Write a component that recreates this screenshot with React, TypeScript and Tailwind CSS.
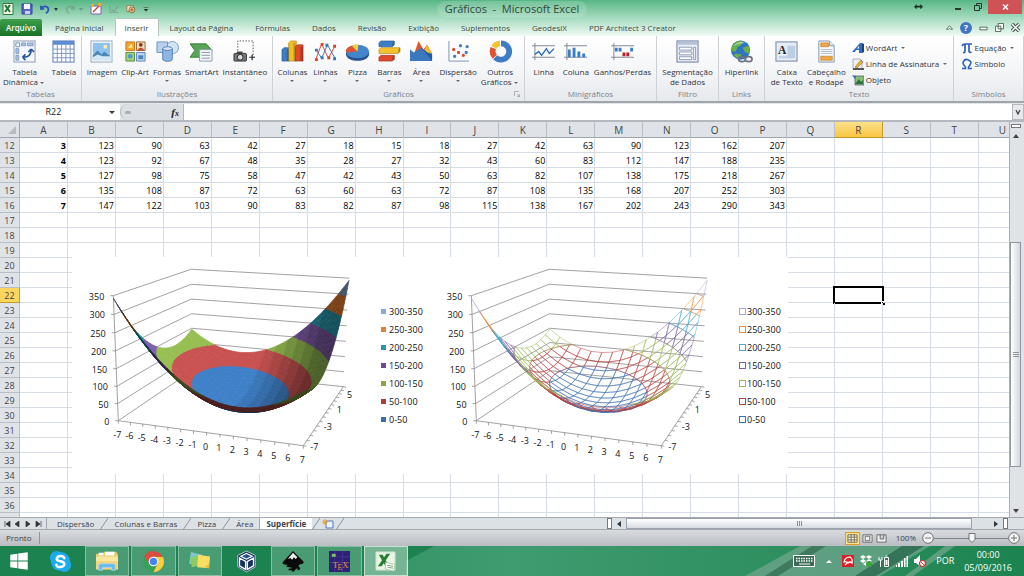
import React from 'react';
import { FaWindows } from 'react-icons/fa';

const TABS = ['Página Inicial', 'Inserir', 'Layout da Página', 'Fórmulas', 'Dados', 'Revisão', 'Exibição', 'Suplementos', 'GeodesiX', 'PDF Architect 3 Creator'];
const COLUMNS = 'ABCDEFGHIJKLMNOPQRSTU'.split('');
const ROWS = Array.from({ length: 26 }, (_, i) => i + 12);
const SHEETS = ['Dispersão', 'Colunas e Barras', 'Pizza', 'Área'];

const BANDS = [
  { label: '0-50', fill: [62, 128, 200], line: '#3a6fb0' },
  { label: '50-100', fill: [200, 82, 80], line: '#b8403c' },
  { label: '100-150', fill: [150, 190, 80], line: '#98b954' },
  { label: '150-200', fill: [128, 92, 172], line: '#7d60a0' },
  { label: '200-250', fill: [40, 160, 182], line: '#46aac5' },
  { label: '250-300', fill: [240, 130, 50], line: '#f08c38' },
  { label: '300-350', fill: [142, 170, 214], line: '#a6a6dc' },
];
const SWATCHES = ['#3f6fa8', '#b03c3a', '#87a54a', '#6b4c94', '#2f93a8', '#dc8138', '#8ea9d0'];

const height = (x: number, y: number) => 3 * x * x + 2 * x * y + 2 * y * y;

/* ---------- surface charts ---------- */

type Point = [number, number, number];

const ORIGIN = [46.3, 163.7];
const EDGES = [
  { at: [231.3, 188.7], k: -0.086 },
  { at: [120, 113.7], k: 0.2455 },
  { at: [41.3, 38.7], k: -0.05 },
];

const depth = ([x, y, z]: Point) =>
  1 + (EDGES[0].k * (x + 7)) / 14 + (EDGES[1].k * (y + 7)) / 14 + (EDGES[2].k * z) / 350;

function project(p: Point): [number, number] {
  const t = [(p[0] + 7) / 14, (p[1] + 7) / 14, p[2] / 350];
  const w = depth(p);
  return [0, 1].map((a) => {
    const sum = EDGES.reduce((n, e, i) => n + t[i] * (e.at[a] * (1 + e.k) - ORIGIN[a]), ORIGIN[a]);
    return sum / w;
  }) as [number, number];
}

const toPoints = (pts: Point[]) => pts.map((p) => project(p).map((n) => n.toFixed(2)).join(',')).join(' ');

// keeps the part of a polygon where sign * (z - level) >= 0
function clip(pts: Point[], level: number, sign: number): Point[] {
  const out: Point[] = [];
  pts.forEach((a, i) => {
    const b = pts[(i + 1) % pts.length];
    const da = sign * (a[2] - level);
    const db = sign * (b[2] - level);
    if (da >= 0) out.push(a);
    if (da * db < 0) {
      const t = da / (da - db);
      out.push([a[0] + t * (b[0] - a[0]), a[1] + t * (b[1] - a[1]), level]);
    }
  });
  return out;
}

function facets(step: number) {
  const list: { band: number; pts: Point[]; far: number; x: number }[] = [];
  for (let x = -7; x < 7; x += step) {
    for (let y = -7; y < 7; y += step) {
      const corner = (cx: number, cy: number): Point => [cx, cy, height(cx, cy)];
      const quad = [corner(x, y), corner(x + step, y), corner(x + step, y + step), corner(x, y + step)];
      const far = quad.reduce((n, p) => n + depth(p), 0);
      BANDS.forEach((_, band) => {
        const pts = clip(clip(quad, band * 50, 1), band * 50 + 50, -1);
        if (pts.length > 2) list.push({ band, pts, far, x });
      });
    }
  }
  return list.sort((a, b) => b.far - a.far);
}

function shade(facet: { band: number; pts: Point[]; x: number }) {
  const s = facet.pts.map(project);
  const area = s.reduce((n, p, i) => {
    const q = s[(i + 1) % s.length];
    return n + p[0] * q[1] - q[0] * p[1];
  }, 0);
  const column = Math.floor(facet.x);
  const light = area > 0 ? 0.38 : Math.max(0.5, Math.min(1, 0.92 - column * 0.08));
  return `rgb(${BANDS[facet.band].fill.map((c) => Math.round(c * light)).join(',')})`;
}

const LEVELS = [0, 50, 100, 150, 200, 250, 300, 350];
const TICKS = Array.from({ length: 15 }, (_, i) => i - 7);

function SurfaceChart({ wire = false, title }: { wire?: boolean; title: string }) {
  return (
    <svg viewBox="0 0 358 217" className="block w-[358px] bg-white font-['Open_Sans',sans-serif] text-[9px]" role="img" aria-label={title}>
      <g fill="none" stroke="#8a8a8a" strokeWidth="0.8">
        {LEVELS.map((z) => {
          const [x, y] = project([-7, -7, z]);
          return (
            <g key={z}>
              <polyline points={toPoints([[-7, -7, z], [-7, 7, z], [7, 7, z]])} />
              <path d={`M${x - 3} ${y}h3`} />
            </g>
          );
        })}
        <polyline points={toPoints([[-7, -7, 350], [-7, -7, 0], [7, -7, 0], [7, 7, 0]])} />
        {TICKS.map((t) => {
          const [x, y] = project([t, -7, 0]);
          const [dx, dy] = project([7, t, 0]);
          return <path key={t} d={`M${x} ${y}v3M${dx} ${dy}l3 .5`} />;
        })}
      </g>
      {facets(wire ? 1 : 0.5).map((f, i) => {
        const color = wire ? BANDS[f.band].line : shade(f);
        return <polygon key={i} points={toPoints(f.pts)} fill={wire ? 'none' : color} stroke={color} strokeWidth={wire ? 0.5 : 0.7} strokeLinejoin="round" />;
      })}
      <g fill="#111">
        {LEVELS.map((z) => {
          const [x, y] = project([-7, -7, z]);
          return <text key={z} x={x - 9} y={y + 4} textAnchor="end">{z}</text>;
        })}
        {TICKS.map((t) => {
          const [x, y] = project([t, -7, 0]);
          return <text key={t} x={x - 1} y={y + 17} textAnchor="middle">{t}</text>;
        })}
        {[-7, -3, 1, 5].map((t) => {
          const [x, y] = project([7, t, 0]);
          return <text key={t} x={x + 11} y={y + 4} textAnchor="middle">{t}</text>;
        })}
        {BANDS.map((b, i) => (
          <g key={b.label}>
            <rect x={wire ? 309.5 : 309} y={(wire ? 159.5 : 160) - 18 * i} width={wire ? 6 : 5} height={wire ? 6 : 5} fill={wire ? '#fff' : SWATCHES[i]} stroke={wire ? b.line : 'none'} />
            <text x="317" y={166 - 18 * i}>{b.label}</text>
          </g>
        ))}
      </g>
    </svg>
  );
}

/* ---------- ribbon icons ---------- */

const ICONS: Record<string, React.ReactNode> = {
  pivot: (
    <>
      <rect x="1" y="1" width="22" height="22" fill="#f4f7fb" stroke="#8a9bb5" />
      <path d="M3 3h4v4H3z" fill="#fff" stroke="#6f8fc0" />
      <path d="M9 3h4v3H9zM15 3h6v3h-6zM3 9h3v5H3zM3 16h3v5H3z" fill="#a9c3e6" stroke="#6f8fc0" strokeWidth=".8" />
      <path d="M11 18c5 0 8-3 8-8M19 9.500l-3 3M19 9.500l3 3M10 18l3-3M10 18l3 3" fill="none" stroke="#24549e" strokeWidth="1.700" />
    </>
  ),
  table: (
    <>
      <rect x="1" y="1" width="22" height="22" fill="#fff" stroke="#5878ad" />
      <path d="M1 1h22v4H1z" fill="#5d8bd2" />
      <path d="M1 9.500h22M1 14h22M1 18.500h22M5.500 5v18M10 5v18M14.500 5v18M19 5v18" stroke="#7e97bd" />
    </>
  ),
  image: (
    <>
      <rect x="1" y="1" width="22" height="22" fill="#f5f8fb" stroke="#99a9bb" />
      <path d="M3 3h18v18H3z" fill="#8fc3ee" />
      <circle cx="16" cy="7" r="2" fill="#fdf0a8" />
      <path d="M3 16l5-5 4 4 3-3 6 5v3H3z" fill="#4a87b8" />
      <path d="M3 18l5-3 5 2h8v4H3z" fill="#d2e8f6" />
    </>
  ),
  clipart: (
    <>
      <path d="M2 2h9v9H2z" fill="#f3a431" stroke="#c97a18" />
      <path d="M13 2h9v9h-9z" fill="#f2ddbb" stroke="#94663b" />
      <path d="M2 13h9v9H2z" fill="#a7d275" stroke="#5a8c43" />
      <path d="M13 13h9v9h-9z" fill="#b9d5f2" stroke="#5f87b8" />
      <path d="M4 8l4-4 1 4z" fill="#fff3a0" />
      <circle cx="17.500" cy="5" r="2" fill="#7c3b1f" />
      <path d="M14 11c1-4 6-4 7 0z" fill="#c34c2b" />
      <circle cx="6.500" cy="17" r="2.500" fill="#4b9bd0" />
      <path d="M15 20v-4h5v4z" fill="#4b82c4" />
    </>
  ),
  shapes: (
    <>
      <circle cx="17" cy="8" r="6.500" fill="#d2e3f4" stroke="#7d9dc4" />
      <path d="M1 2h11v11H1z" fill="#b8d1ec" stroke="#6e92be" />
      <path d="M7 9v11c0 3 10 3 10 0V9z" fill="#8db6e3" stroke="#567fb2" />
      <ellipse cx="12" cy="9" rx="5" ry="2" fill="#d5e6f7" stroke="#567fb2" />
    </>
  ),
  smartart: (
    <>
      <path d="M0 4h17l6 7-6 7H0l5-7z" fill="#58a557" stroke="#39813d" />
      <path d="M10 10h13v12H10z" fill="#f4f7fa" stroke="#8d9bb0" />
      <path d="M12 13h9M12 16h9M12 19h9" stroke="#8a98ac" />
    </>
  ),
  snapshot: (
    <>
      <path d="M5 11V1h16v15" fill="none" stroke="#555" strokeDasharray="1.500 1.500" />
      <rect x="1" y="14" width="13" height="8" rx="1" fill="#777" stroke="#333" />
      <path d="M4 12h6v2H4z" fill="#444" />
      <circle cx="7.500" cy="18" r="3" fill="#d7dde4" stroke="#222" />
      <path d="M17 18h6M20 15v6" stroke="#222" strokeWidth="1.200" />
    </>
  ),
  columns: (
    <>
      <path d="M1 10l2-2h6v14H1z" fill="#3e7cc6" stroke="#245690" strokeWidth=".6" />
      <path d="M8 3l2-2h6v21H8z" fill="#f0bf22" stroke="#a87e0c" strokeWidth=".6" />
      <path d="M15 7l2-2h6v17h-8z" fill="#e2492c" stroke="#9c2a16" strokeWidth=".6" />
      <path d="M6 10h2v12H6zM13 3h2v19h-2zM20 7h3v15h-3z" fill="#000" opacity=".2" />
    </>
  ),
  lines: (
    <>
      <path d="M2 20L8 4l7 15 7-13" fill="none" stroke="#d6452c" />
      <path d="M2 10l6 9 6-14 8 14" fill="none" stroke="#3976b9" />
      <path d="M1 19h3v3H1zM7 3h3v3H7zM14 17h3v3h-3zM20 5h3v3h-3z" fill="#d6452c" />
      <path d="M1 9h3v3H1zM7 17h3v3H7zM12 4h3v3h-3zM20 18h3v3h-3z" fill="#3976b9" />
    </>
  ),
  pie: (
    <>
      <path d="M0 12v3c1 9 23 9 24 0v-3z" fill="#24538e" />
      <ellipse cx="12" cy="12" rx="12" ry="7" fill="#4384cb" />
      <path d="M12 12L0 13v-1C0 9 2 7 6 6z" fill="#df5330" />
      <path d="M12 12L6 6q3-2 7-1z" fill="#f6cf38" />
    </>
  ),
  bars: (
    <>
      <path d="M1 3l2-2h14v4l-2 2H1z" fill="#3e7cc6" stroke="#245690" strokeWidth=".6" />
      <path d="M1 10l2-2h20v4l-2 2H1z" fill="#f3c22c" stroke="#a87e0c" strokeWidth=".6" />
      <path d="M1 18l2-2h14v4l-2 2H1z" fill="#e2492c" stroke="#9c2a16" strokeWidth=".6" />
      <path d="M15 3l2-2v4l-2 2zM21 10l2-2v4l-2 2zM15 18l2-2v4l-2 2z" fill="#000" opacity=".25" />
    </>
  ),
  area: (
    <>
      <path d="M3 18L9 1l5 9 4-5 5 9v7H3z" fill="#e2562e" />
      <path d="M18 5l5 9v6l-8-9z" fill="#f0bd2b" />
      <path d="M0 22V10l4 3 8-5 6 5 5 1v8z" fill="#3a78c0" />
      <path d="M12 8l6 5 5 2v7z" fill="#265a9b" />
    </>
  ),
  scatter: (
    <>
      <path d="M2 1v21h21" fill="none" stroke="#7e93b4" />
      <path d="M6 9h2v2H6zM11 12h2v2h-2zM16 15h2v2h-2z" fill="#d6452c" stroke="#d6452c" />
      <path d="M13 5h2v2h-2zM7 16h2v2H7zM20 6h2v2h-2zM19 12h2v2h-2z" fill="#3976b9" stroke="#3976b9" />
    </>
  ),
  donut: (
    <>
      <path d="M12.500 3.500a8.500 8.500 0 1 1-6 14.500" fill="none" stroke="#3e7cc6" strokeWidth="6" />
      <path d="M6 17.500a8.500 8.500 0 0 1-1.500-9" fill="none" stroke="#df5330" strokeWidth="6" />
      <path d="M5 7.500a8.500 8.500 0 0 1 6.500-4" fill="none" stroke="#f2c633" strokeWidth="6" />
    </>
  ),
  sparkline: (
    <>
      <path d="M0 6h24M0 18h24M3 3v18" stroke="#7d8794" />
      <path d="M3 15l4-3 3 4 5-7 3 5 5-5" fill="none" stroke="#2d6ab5" strokeWidth="1.400" />
    </>
  ),
  sparkcol: (
    <>
      <path d="M0 6h24M0 18h24M3 3v18" stroke="#7d8794" />
      <path d="M4 10h3v8H4zM9 8h3v10H9zM14 12h3v6h-3zM19 14h3v4h-3z" fill="#3e7cc6" />
    </>
  ),
  winloss: (
    <>
      <path d="M0 6h24M0 18h24M3 3v18" stroke="#7d8794" />
      <path d="M4 8h3v4H4zM8 8h3v4H8zM20 8h3v4h-3z" fill="#3e7cc6" />
      <path d="M12 13h3v4h-3zM16 13h3v4h-3z" fill="#b3202c" />
    </>
  ),
  slicer: (
    <>
      <rect x="1" y="1" width="22" height="22" fill="#eef2f8" stroke="#62769a" />
      <path d="M2 2h20v3H2z" fill="#b4c3db" />
      <path d="M3.500 7.500h13v3h-13zM3.500 12.500h13v3h-13zM3.500 17.500h13v3h-13zM18.500 7.500h2v13h-2z" fill="#fff" stroke="#7b8dae" strokeWidth=".9" />
    </>
  ),
  globe: (
    <>
      <circle cx="11" cy="10.500" r="10" fill="#2c74c4" />
      <path d="M3 5c4-5 9-5 11-3l-3 4-3 1-2 5-4 0c-1-2 0-5 1-7zM13 8l6-2c2 3 2 6 1 8l-4-1zM6 14l6 1-2 5c-3-1-5-3-6-5z" fill="#69b14a" />
      <path d="M4 6c3-4 8-5 12-3-4 0-8 1-12 3z" fill="#fff" opacity=".5" />
      <path d="M9 20c0-3.500 7-3.500 7 0s-7 3.500-7 0zM16 20c0-3.500 7-3.500 7 0s-7 3.500-7 0z" fill="none" stroke="#6c7280" strokeWidth="1.700" />
    </>
  ),
  textbox: (
    <>
      <rect x="1" y="2" width="22" height="20" fill="#e4ecf6" stroke="#70809a" />
      <path d="M13 6h8v13H4v-2h9z" fill="#bccde4" />
      <text x="3" y="15" fontSize="12" fontWeight="700" fontFamily="Liberation Serif, serif" fill="#222">A</text>
    </>
  ),
  headerfooter: (
    <>
      <path d="M4 1h11l5 5v17H4z" fill="#f4f7fb" stroke="#8494ad" />
      <path d="M6 3h8v4H6zM6 17h12v4H6z" fill="#f0a64a" stroke="#c77c22" strokeWidth=".7" />
      <path d="M6 10h12M6 12h12M6 14h12" stroke="#b3c0d3" />
      <path d="M15 1v5h5" fill="#dce4ef" stroke="#8494ad" />
    </>
  ),
};

function Icon({ name }: { name: string }) {
  return <svg viewBox="0 0 24 24" className="block size-[23px]" aria-hidden="true">{ICONS[name]}</svg>;
}

function Caret() {
  return <span className="mx-[2px] inline-block border-x-2 border-t-2 border-x-transparent border-t-[#666] align-middle" />;
}

type Tool = { icon: string; lines: string[]; menu?: 'below' | 'inline' };

const GROUPS: { label: string; tools: Tool[] }[] = [
  { label: 'Tabelas', tools: [{ icon: 'pivot', lines: ['Tabela', 'Dinâmica'], menu: 'inline' }, { icon: 'table', lines: ['Tabela'] }] },
  {
    label: 'Ilustrações',
    tools: [
      { icon: 'image', lines: ['Imagem'] },
      { icon: 'clipart', lines: ['Clip-Art'] },
      { icon: 'shapes', lines: ['Formas'], menu: 'below' },
      { icon: 'smartart', lines: ['SmartArt'] },
      { icon: 'snapshot', lines: ['Instantâneo'], menu: 'below' },
    ],
  },
  {
    label: 'Gráficos',
    tools: [
      { icon: 'columns', lines: ['Colunas'], menu: 'below' },
      { icon: 'lines', lines: ['Linhas'], menu: 'below' },
      { icon: 'pie', lines: ['Pizza'], menu: 'below' },
      { icon: 'bars', lines: ['Barras'], menu: 'below' },
      { icon: 'area', lines: ['Área'], menu: 'below' },
      { icon: 'scatter', lines: ['Dispersão'], menu: 'below' },
      { icon: 'donut', lines: ['Outros', 'Gráficos'], menu: 'inline' },
    ],
  },
  {
    label: 'Minigráficos',
    tools: [{ icon: 'sparkline', lines: ['Linha'] }, { icon: 'sparkcol', lines: ['Coluna'] }, { icon: 'winloss', lines: ['Ganhos/Perdas'] }],
  },
  { label: 'Filtro', tools: [{ icon: 'slicer', lines: ['Segmentação', 'de Dados'] }] },
  { label: 'Links', tools: [{ icon: 'globe', lines: ['Hiperlink'] }] },
];

const TEXT_TOOLS: Tool[] = [
  { icon: 'textbox', lines: ['Caixa', 'de Texto'] },
  { icon: 'headerfooter', lines: ['Cabeçalho', 'e Rodapé'] },
];

function ToolButton({ tool }: { tool: Tool }) {
  return (
    <button className="flex min-w-8 flex-col items-center whitespace-nowrap px-[2px] leading-[10px]">
      <Icon name={tool.icon} />
      <span className="mt-1">{tool.lines[0]}</span>
      {tool.lines[1] && <span>{tool.lines[1]}{tool.menu === 'inline' && <Caret />}</span>}
      {tool.menu === 'below' && <span className="mt-[3px] flex"><Caret /></span>}
    </button>
  );
}

function Group({ label, children, launcher }: { label: string; children: React.ReactNode; launcher?: boolean }) {
  return (
    <section className="relative flex min-w-0 flex-col border-r border-[#cdd1d6]">
      <div className="flex flex-1 items-start justify-center pt-1">{children}</div>
      <div className="pb-px text-center leading-3 text-[#7b828b]">{label}</div>
      {launcher && (
        <svg viewBox="0 0 6 6" className="absolute bottom-1 right-1 size-[6px]" fill="none" stroke="#999" strokeWidth=".7"><path d="M.5 5V.5H5M3 3l2.500 2.500V3M5.500 5.500H3" /></svg>
      )}
    </section>
  );
}

function SmallTool({ icon, label, menu }: { icon: React.ReactNode; label: string; menu?: boolean }) {
  return (
    <button className="flex h-[16px] items-center whitespace-nowrap">
      <svg viewBox="0 0 12 12" className="mr-[2px] size-3" aria-hidden="true">{icon}</svg>
      {label}
      {menu && <span className="ml-[2px] flex"><Caret /></span>}
    </button>
  );
}

function Ribbon() {
  return (
    <div className="grid h-[65px] grid-cols-[82fr_191fr_252fr_132fr_62fr_46fr_189fr_70fr] bg-linear-to-b from-white via-[#f5f6f8] to-[#e6e9ed]">
      {GROUPS.map((g) => (
        <Group key={g.label} label={g.label} launcher={g.label === 'Gráficos'}>
          {g.tools.map((t) => <ToolButton key={t.icon} tool={t} />)}
        </Group>
      ))}
      <Group label="Texto">
        {TEXT_TOOLS.map((t) => <ToolButton key={t.icon} tool={t} />)}
        <div className="ml-1 flex flex-col items-start">
          <SmallTool menu label="WordArt" icon={<><path d="M0 10L8 1h2v10H7V8H4l-1 2z" fill="#2e6cbd" /><path d="M10 1l2 1v8l-2 1z" fill="#17437f" /><path d="M5 6.500h2V4z" fill="#fff" /></>} />
          <SmallTool menu label="Linha de Assinatura" icon={<><path d="M1 1h7l2 2v8H1z" fill="#eef2f7" stroke="#8290a5" strokeWidth=".7" /><path d="M3 9l6-7 2 2-6 6z" fill="#e9b03a" stroke="#7a5a1c" strokeWidth=".5" /><path d="M1 10h11v2H1z" fill="#555" /></>} />
          <SmallTool label="Objeto" icon={<><path d="M3 2h9v9H3z" fill="#8cc07a" stroke="#456" strokeWidth=".7" /><path d="M3 10l4-5 2 3 2-2v4z" fill="#2a7140" /><path d="M0 1l4 1-1 3z" fill="#2b62b4" /></>} />
        </div>
      </Group>
      <Group label="Símbolos">
        <div className="flex flex-col items-start">
          <SmallTool menu label="Equação" icon={<path d="M1 4q1-2 3-2h7M4 2.500V9q0 2-2 1.500M8 2.500V9q0 2 2.500 1" fill="none" stroke="#2c62b5" strokeWidth="1.700" />} />
          <SmallTool label="Símbolo" icon={<path d="M1 10.500h3.500V9Q1 6 2.500 3.500T6 1.500t3.500 2T7.500 9v1.500H11" fill="none" stroke="#2c62b5" strokeWidth="1.600" />} />
        </div>
      </Group>
    </div>
  );
}

/* ---------- window frame ---------- */

function QuickAccess() {
  return (
    <div className="flex h-[17px] items-center gap-[7px] pl-[2px]">
      <svg viewBox="0 0 12 12" className="size-3"><path d="M1 .5h10v11H1z" fill="#f2faf0" stroke="#2f7f36" /><path d="M3 2l5 7M8 2L3 9" stroke="#21762f" strokeWidth="2" /></svg>
      <svg viewBox="0 0 12 12" className="size-3"><path d="M1 1h10v10H1z" fill="#5765c4" stroke="#39449a" /><path d="M3 1h6v5H3z" fill="#f3f5fc" /><path d="M4 8h5v3H4z" fill="#cbd0ee" /></svg>
      <div className="flex items-center gap-1">
        <svg viewBox="0 0 12 12" className="size-[10px]"><path d="M1 2v4h4M1.500 5.500C5 1 11 3 10 8q-1 2-3 3" fill="none" stroke="#2d55b8" strokeWidth="2" /></svg>
        <span className="border-x-2 border-t-[3px] border-x-transparent border-t-[#333]" />
      </div>
      <div className="flex items-center gap-1 opacity-50">
        <svg viewBox="0 0 12 12" className="size-[10px]"><path d="M11 2v4H7M10.500 5.500C7 1 1 3 2 8q1 2 3 3" fill="none" stroke="#6f8f82" strokeWidth="2" /></svg>
        <span className="border-x-2 border-t-[3px] border-x-transparent border-t-[#577]" />
      </div>
      <svg viewBox="0 0 12 12" className="size-3"><path d="M1 3h10v8H1z" fill="#fafcff" stroke="#8d5ab0" /><path d="M1 1h3v3H1zM8 0h3v3H8z" fill="#e9ae31" /><path d="M3 9l6-6" stroke="#c04a48" strokeWidth="1.500" /></svg>
      <svg viewBox="0 0 12 12" className="size-[10px] opacity-60"><path d="M1 2v8h10M3 6l3 3 5-6" fill="none" stroke="#78938a" strokeWidth="1.500" /></svg>
      <svg viewBox="0 0 12 12" className="size-[10px]"><path d="M1 2h8v7H1z" fill="#f1e6cf" stroke="#9a7446" /><circle cx="7" cy="7" r="3.500" fill="#e8c28d" stroke="#8e633b" /><path d="M5 7h4M7 5v4" stroke="#a3502c" /></svg>
      <svg viewBox="0 0 10 10" className="size-[6px]"><path d="M1 2h8v1H1zM1 5h8L5 9z" fill="#333" /></svg>
    </div>
  );
}

function TitleArea() {
  return (
    <header className="bg-linear-to-b from-[#55b685] via-[#a5dbbf] to-[#f1faf5]">
      <div className="grid h-[18px] grid-cols-[1fr_auto_1fr] items-center">
        <QuickAccess />
        <h1 className="rounded-full bg-white/15 px-2 text-[11px] leading-4 text-[#31493d]">Gráficos&nbsp; - &nbsp;Microsoft Excel</h1>
        <div className="flex h-full items-start justify-end pr-[2px]">
          <svg viewBox="0 0 10 6" className="mr-[25px] mt-1 w-[9px]"><path d="M0 3l3-3v2h4V0l3 3-3 3V4H3v2z" fill="#173426" /></svg>
          <button aria-label="Minimizar" className="h-[14px] w-5 text-[#24382e]"><svg viewBox="0 0 20 14"><path d="M7 8h6v2H7z" fill="currentColor" /></svg></button>
          <button aria-label="Restaurar" className="h-[14px] w-5 text-[#24382e]"><svg viewBox="0 0 20 14" fill="none" stroke="currentColor"><path d="M6.500 5.500h5v5h-5zM8.500 5V3.500h5v5H12" /></svg></button>
          <button aria-label="Fechar" className="h-[14px] w-[34px] bg-[#cf5355] text-white"><svg viewBox="0 0 34 14" stroke="currentColor" strokeWidth="1.500"><path d="M15 4.500l5 5M20 4.500l-5 5" /></svg></button>
        </div>
      </div>
      <nav className="flex h-[18px] items-end text-[#3c4a43]">
        <a href="#arquivo" className="mr-[2px] flex h-[17px] w-[42px] items-center justify-center rounded-t-[2px] bg-linear-to-b from-[#3f9e4c] to-[#187424] font-semibold text-white">Arquivo</a>
        {TABS.map((t) => (
          <a key={t} href={`#${t}`} className={t === 'Inserir' ? 'flex h-[18px] items-center rounded-t-[2px] border border-b-0 border-[#b5c8bf] bg-white px-[9px]' : 'flex h-[17px] items-center px-[11px]'}>
            {t}
          </a>
        ))}
        <div className="ml-auto flex h-[17px] items-center gap-[7px] pr-1 text-[#45614f]">
          <svg viewBox="0 0 8 8" className="size-[7px]" fill="#fff" stroke="currentColor"><path d="M.5 6L4 2l3.500 4H5L4 5 3 6z" /></svg>
          <button aria-label="Ajuda" className="flex size-3 items-center justify-center rounded-full bg-[#4274c4] text-[9px] font-bold text-white">?</button>
          <svg viewBox="0 0 10 8" className="w-[9px]" fill="#fff" stroke="currentColor"><path d="M1 3.500h8v3H1z" /></svg>
          <svg viewBox="0 0 10 10" className="size-[9px]" fill="#fff" stroke="currentColor"><path d="M3.500.5h6v6h-6zM.5 3.500h6v6h-6z" /></svg>
          <svg viewBox="0 0 10 10" className="size-[9px]"><path d="M1 1l8 8M9 1L1 9" stroke="#45614f" strokeWidth="4" /><path d="M1 1l8 8M9 1L1 9" stroke="#fff" strokeWidth="1.500" /></svg>
        </div>
      </nav>
    </header>
  );
}

function FormulaBar() {
  return (
    <div className="flex h-[21px] border-y-2 border-t-[#9fa4aa] border-b-[#b4b9bf] bg-[#e4e7ea] pt-px">
      <input aria-label="Caixa de nome" defaultValue="R22" className="w-[107px] bg-white text-center text-[9px] text-[#222] outline-none" />
      <span className="flex w-[13px] items-center bg-white"><span className="ml-[2px] border-x-[3px] border-t-[3px] border-x-transparent border-t-[#333]" /></span>
      <div className="flex w-[64px] items-center justify-between rounded-l-full border-l border-r border-[#b3b8be] bg-[#dcdfe4] px-1">
        <span className="h-[3px] w-[6px] rounded-full bg-[#a9b0b8]" />
        <span className="font-['Liberation_Serif',serif] text-[11px] font-bold italic leading-none text-[#222]">f<span className="text-[8px]">x</span></span>
      </div>
      <input aria-label="Barra de fórmulas" className="min-w-0 flex-1 bg-white outline-none" />
      <button aria-label="Expandir" className="flex w-3 items-center justify-center border border-[#b3b8be] bg-[#e7e9ec]">
        <svg viewBox="0 0 6 6" className="size-[6px]"><path d="M1 1l2 4 2-4" fill="none" stroke="#444" strokeWidth="1.300" /></svg>
      </button>
    </div>
  );
}

/* ---------- sheet ---------- */

function cellValue(row: number, col: number) {
  if (row > 16 || col > 15) return '';
  const y = row - 9;
  return col === 0 ? y : height(col - 8, y);
}

function Sheet() {
  return (
    <div className="relative min-w-0 flex-1 overflow-hidden bg-white">
      <table className="w-[1027px] table-fixed border-separate border-spacing-0 text-[9px] text-black">
        <thead>
          <tr className="h-[16px] leading-[14px] text-[#444]">
            <th className="w-5 border-b border-r border-[#9ea5ae] bg-[#dfe3e8] p-0" aria-label="Selecionar tudo">
              <span className="ml-2 block size-0 border-b-8 border-l-8 border-b-[#b6bcc4] border-l-transparent" />
            </th>
            {COLUMNS.map((c) => (
              <th key={c} className={c === 'R' ? 'border-b border-r border-[#c49a2c] bg-linear-to-b from-[#fbe08a] to-[#fac63c] p-0 pt-px text-[10px] font-normal' : 'border-b border-r border-[#9ea5ae] border-r-[#b9bfc7] bg-[#dfe3e8] p-0 pt-px text-[10px] font-normal'}>
                {c}
              </th>
            ))}
          </tr>
        </thead>
        <tbody className="leading-[13px]">
          {ROWS.map((r) => (
            <tr key={r} className="h-[15px]">
              <th className={r === 22 ? 'border-b border-r border-[#c49a2c] bg-[#fcd55f] p-0 pt-px font-normal text-[#444]' : 'border-b border-r border-[#b9bfc7] bg-[#dfe3e8] p-0 pt-px font-normal text-[#444]'}>{r < 37 ? r : ''}</th>
              {COLUMNS.map((c, i) => (
                <td key={c} className={i === 0 ? 'border-b border-r border-[#d6dce4] p-0 pr-px pt-px text-right font-bold' : 'relative border-b border-r border-[#d6dce4] p-0 pr-px pt-px text-right'}>
                  {cellValue(r, i)}
                  {r === 22 && c === 'R' && (
                    <span className="absolute -bottom-[2px] -left-[2px] -right-[2px] -top-[2px] border-2 border-black">
                      <span className="absolute -bottom-[3px] -right-[3px] size-1 border-l border-t border-white bg-black" />
                    </span>
                  )}
                </td>
              ))}
            </tr>
          ))}
        </tbody>
      </table>
      <div className="absolute left-[72px] top-[135px] flex">
        <SurfaceChart title="Superfície 3D" />
        <SurfaceChart wire title="Superfície 3D delineada" />
      </div>
    </div>
  );
}

function VerticalScroll() {
  return (
    <div className="flex w-[15px] flex-col items-center border-l border-[#a9afb7] bg-[#dfe2e6] pr-[3px]">
      <span className="mt-[2px] h-1 w-[10px] border border-[#777] bg-white" />
      <span className="mt-[6px] border-x-[3px] border-b-4 border-x-transparent border-b-[#444]" />
      <div className="mt-[104px] flex min-h-0 w-[11px] flex-1 flex-col items-center justify-center gap-px border border-[#8e969f] bg-linear-to-r from-white to-[#d3d8df]">
        {[0, 1, 2].map((i) => <span key={i} className="h-px w-[6px] bg-[#8e969f]" />)}
      </div>
      <span className="mb-1 mt-[42px] border-x-[3px] border-t-4 border-x-transparent border-t-[#444]" />
    </div>
  );
}

function SheetTabs() {
  const slash = <svg viewBox="0 0 8 12" className="h-3 w-2 shrink-0"><path d="M0 12L8 0" stroke="#8e959e" /></svg>;
  return (
    <div className="flex h-[13px] items-stretch border-y border-[#a3a9b1] bg-[#dce1e6] leading-[12px] text-[#3c4148]">
      <div className="flex w-[47px] items-center justify-around border-r border-[#a3a9b1] px-[2px]">
        {['M1 0v6M6 0v6L2 3z', 'M5 0v6L1 3z', 'M1 0v6l4-3z', 'M6 0v6M1 0v6l4-3z'].map((d) => (
          <button key={d} aria-label="Navegar" className="block"><svg viewBox="0 0 7 6" className="h-[6px] w-[7px]" fill="#333" stroke="#333" strokeWidth=".7"><path d={d} /></svg></button>
        ))}
      </div>
      <div className="flex pl-1">
        {SHEETS.map((s, i) => (
          <React.Fragment key={s}>
            <button className="whitespace-nowrap px-[6px]">{s}</button>
            {i < SHEETS.length - 1 && slash}
          </React.Fragment>
        ))}
        <button className="border-l border-[#a3a9b1] bg-white px-[6px] font-bold">Superfície</button>
        {slash}
        <button aria-label="Inserir planilha" className="flex items-center px-[2px]"><svg viewBox="0 0 12 10" className="h-[10px] w-3"><path d="M4 2h7v7H4z" fill="#eaf1fb" stroke="#5877b4" /><path d="M0 3h6M3 0v6M1 1l4 4M5 1L1 5" stroke="#e3a036" /></svg></button>
        {slash}
      </div>
      <div className="ml-auto flex w-[417px] items-stretch">
        <span className="w-[5px] border border-[#777] bg-white" />
        <span className="flex w-[14px] items-center justify-center"><i className="border-y-[3px] border-r-4 border-y-transparent border-r-[#333]" /></span>
        <div className="flex flex-1 items-center justify-center gap-px border border-[#9ba2ab] bg-linear-to-b from-white to-[#d7dce2]">
          {[0, 1, 2].map((i) => <span key={i} className="h-[5px] w-px bg-[#858d97]" />)}
        </div>
        <span className="flex w-[31px] items-center justify-end pr-[5px]"><i className="border-y-[3px] border-l-4 border-y-transparent border-l-[#333]" /></span>
        <span className="mr-4 w-[5px] border border-[#777] bg-white" />
      </div>
    </div>
  );
}

function StatusBar() {
  return (
    <div className="flex h-4 items-center bg-linear-to-b from-[#d9dcdf] to-[#b9bdc2] pr-1 text-[#3c4148]">
      <span className="flex h-3 w-10 items-center border-r border-[#8f959c] pl-[6px]">Pronto</span>
      <div className="ml-auto flex items-center">
        <button aria-label="Normal" className="border border-[#d9a11f] bg-[#fbe28e] p-px"><svg viewBox="0 0 12 9" className="h-[9px] w-[11px]" fill="#fff" stroke="#6c6440"><path d="M1 .5h10v8H1zM1 3h10M1 6h10M4.500 0v9M8 0v9" /></svg></button>
        <button aria-label="Layout da página" className="ml-[2px]"><svg viewBox="0 0 12 9" className="h-[9px] w-[11px]" fill="#eee" stroke="#666"><path d="M1 .5h10v8H1zM3.500 2h5v5h-5z" /></svg></button>
        <button aria-label="Quebra de página" className="ml-[3px]"><svg viewBox="0 0 12 9" className="h-[9px] w-[11px]" fill="#eee" stroke="#666"><path d="M1 .5h10v8H1zM4.500 0v5h4V0" /></svg></button>
        <span className="ml-[9px]">100%</span>
        <button aria-label="Diminuir zoom" className="ml-[6px] flex"><svg viewBox="0 0 12 12" className="size-3" fill="#f3f4f5" stroke="#555" strokeWidth=".8"><circle cx="6" cy="6" r="5.300" /><path d="M3 6h6" /></svg></button>
        <div className="relative w-[74px]">
          <div className="h-px bg-[#7e858d]" />
          <svg viewBox="0 0 8 10" className="absolute -top-[5px] left-[34px] h-[10px] w-2"><path d="M1 .5h6v6L4 9.500l-3-3z" fill="#f5f6f7" stroke="#555" strokeWidth=".8" /></svg>
        </div>
        <button aria-label="Aumentar zoom" className="flex"><svg viewBox="0 0 12 12" className="size-3" fill="#f3f4f5" stroke="#555" strokeWidth=".8"><circle cx="6" cy="6" r="5.300" /><path d="M3 6h6M6 3v6" /></svg></button>
      </div>
    </div>
  );
}

/* ---------- taskbar ---------- */

const APPS: { name: string; state?: 'open' | 'active'; art: React.ReactNode }[] = [
  {
    name: 'Skype',
    art: (
      <svg viewBox="0 0 24 24" className="size-[23px]">
        <circle cx="8" cy="8" r="7" fill="#1cabec" /><circle cx="16" cy="16" r="7" fill="#1cabec" /><circle cx="12" cy="12" r="10" fill="#1cabec" />
        <path d="M16 8.500Q15 6.300 12 6.300T8 9q0 2 4 2.800t4 3-4 2.900-4.300-2.400" fill="none" stroke="#fff" strokeWidth="2.600" strokeLinecap="round" />
      </svg>
    ),
  },
  {
    name: 'Explorador de Arquivos',
    state: 'open',
    art: (
      <svg viewBox="0 0 26 24" className="h-[22px] w-6">
        <path d="M1 4h7l2-2h13l2 3v16H1z" fill="#e9c869" /><path d="M4 3h5v3H4zM11 2h10v4H11z" fill="#fff" /><path d="M1 7h24v14H1z" fill="#f9e7a0" />
        <path d="M1 12h24v9H1z" fill="#f3d67c" /><path d="M4 22v-5q0-2 2-2h14q2 0 2 2v5h-4v-3H8v3z" fill="#6cb8e6" stroke="#a9d8f2" />
      </svg>
    ),
  },
  {
    name: 'Chrome',
    state: 'open',
    art: (
      <svg viewBox="0 0 24 24" className="size-[21px]">
        <circle cx="12" cy="12" r="12" fill="#35a353" />
        <path d="M12 6.500h10.700A12 12 0 0 1 12 24l4.800-9.300z" fill="#fccd3f" />
        <path d="M1.600 6A12 12 0 0 1 22.500 6.500H12L7.200 14.700z" fill="#dd4b3e" />
        <circle cx="12" cy="12" r="5.500" fill="#fff" /><circle cx="12" cy="12" r="4.300" fill="#4287f0" />
      </svg>
    ),
  },
  {
    name: 'Notas Autoadesivas',
    state: 'open',
    art: (
      <svg viewBox="0 0 26 22" className="h-5 w-6"><path d="M3 1l12 3-3 12-11-2z" fill="#7cc7c9" /><path d="M2 8l9-3 4 10-11 3z" fill="#8ccd61" /><path d="M11 4l13 2-1 13-13-1z" fill="#f9df61" /><path d="M23 19l-5-1 5-4z" fill="#e6bd3c" /></svg>
    ),
  },
  {
    name: 'VirtualBox',
    art: (
      <svg viewBox="0 0 24 26" className="h-[23px] w-[21px]"><path d="M12 1l10 5v13l-10 6-10-6V6z" fill="#16325e" stroke="#c2cee0" /><path d="M4 7l8-4 8 4-8 4z" fill="#fff" /><path d="M7 7l5-2.500L17 7l-5 2.500z" fill="#24518e" /><path d="M4 9l7 4v9l-7-4zM20 9l-7 4v9l7-4z" fill="none" stroke="#fff" strokeWidth="1.500" /></svg>
    ),
  },
  {
    name: 'Inkscape',
    state: 'open',
    art: (
      <svg viewBox="0 0 26 24" className="h-[21px] w-6"><path d="M13 0l12 12q1 3-4 3l-2 2 2 2q-4 0-5 2l-3 3-3-3 2-2-7-1 2-2-5-1q-2-2 0-3z" fill="#0b0b0b" /><path d="M13 2l5 5-2 2-2-2-2 3-2-2-3 1z" fill="#e8edf3" /><path d="M8 21h4M18 21l3-1" stroke="#0b0b0b" strokeWidth="2" /></svg>
    ),
  },
  {
    name: 'TeX',
    state: 'open',
    art: (
      <svg viewBox="0 0 22 22" className="size-[21px]"><path d="M0 0h22v22H0z" fill="#2d2275" /><path d="M0 6h22M0 12h22M6 0v22M14 0v22" stroke="#5146a0" strokeWidth=".6" /><path d="M3 3h4v3H3z" fill="#86c660" /><text x="4" y="18" fontSize="9" fontFamily="Liberation Serif, serif" fill="#f0912f">T</text><text x="9" y="20" fontSize="8" fontFamily="Liberation Serif, serif" fill="#f0912f">E</text><text x="14" y="18" fontSize="9" fontFamily="Liberation Serif, serif" fill="#f0912f">X</text></svg>
    ),
  },
  {
    name: 'Excel',
    state: 'active',
    art: (
      <svg viewBox="0 0 22 22" className="size-[21px]"><path d="M1 1h20v19H1z" fill="#eaf5e5" stroke="#c9e2c0" /><path d="M4 4h4l7 12h-4zM12 3h4L7 16H3z" fill="#2c8036" /><path d="M11 12l10 2-1 7-9-2z" fill="#fff" stroke="#a9c7a4" /><path d="M13 15l6 1M13 17l6 1" stroke="#7aa374" /></svg>
    ),
  },
];

function Taskbar() {
  return (
    <footer className="relative flex h-[30px] items-stretch overflow-hidden bg-linear-to-r from-[#1f8350] via-[#3f9b70] to-[#1c8450] text-white">
      <svg viewBox="0 0 1024 30" preserveAspectRatio="none" className="absolute inset-0 size-full" aria-hidden="true">
        <path d="M0 0h434l-28 15v15H0z" fill="#1c8250" />
        <path d="M745 30L800 0h130l-50 30z" fill="#6fa68c" opacity=".75" />
        <path d="M765 30L812 0h14l-48 30z" fill="#2d6148" opacity=".6" />
        <path d="M855 30L902 0h22l-48 30z" fill="#27634a" opacity=".7" />
        <path d="M905 30L945 0h10l-42 30z" fill="#75a891" opacity=".7" />
      </svg>
      <button aria-label="Iniciar" className="relative flex w-[38px] items-center justify-center"><FaWindows className="size-5" /></button>
      <div className="relative grid w-[370px] grid-cols-8 gap-[2px]">
        {APPS.map((a) => (
          <button
            key={a.name}
            aria-label={a.name}
            className={a.state === 'active' ? 'flex items-center justify-center border border-white/60 bg-white/40' : a.state === 'open' ? 'flex items-center justify-center border border-white/35 bg-white/20' : 'flex items-center justify-center'}
          >
            {a.art}
          </button>
        ))}
      </div>
      <div className="relative ml-auto flex items-center pr-3">
        <svg viewBox="0 0 22 12" className="w-[22px]"><path d="M.5.5h21v11H.5z" fill="#3c6b55" stroke="#fff" /><path d="M3 3.500h17M3 6h17" stroke="#fff" strokeWidth="1.500" strokeDasharray="1.500 1" /><path d="M6 9h11" stroke="#fff" /></svg>
        <span className="ml-[11px] border-x-[3px] border-b-[3px] border-x-transparent border-b-white" />
        <svg viewBox="0 0 12 12" className="ml-[10px] size-3"><path d="M0 0h12v12H0z" fill="#dc1f2a" /><path d="M2 7q1-5 6-5 3 2 2 6-2-2-4 0-2-2-4-1zM6 7l-3 3" fill="none" stroke="#fff" strokeWidth="1.200" /></svg>
        <svg viewBox="0 0 12 12" className="ml-[6px] size-3"><path d="M3 0l3 2-3 2-3-2zM9 0l3 2-3 2-3-2zM3 4l3 2-3 2-3-2zM9 4l3 2-3 2-3-2zM6 7l3 2-3 2-3-2z" fill="#fff" /><circle cx="9" cy="9" r="3" fill="#3aa63a" /></svg>
        <svg viewBox="0 0 12 12" className="ml-[6px] size-3" fill="none" stroke="#fff"><path d="M6.500 2.500h4v9h-4zM7.500 1h2M2.500 5v7M1 2v3h3V2" /><path d="M8.500 5v5" strokeWidth="2" /></svg>
        <svg viewBox="0 0 12 12" className="ml-[6px] size-3"><path d="M0 10h1v2H0zM2 8h2v4H2zM5 6h2v6H5zM8 3h1.500v9H8zM10.500 1H12v11h-1.500z" fill="#fff" /></svg>
        <svg viewBox="0 0 12 12" className="ml-[6px] size-3"><path d="M0 4h2l4-4v11L2 8H0z" fill="#fff" /><circle cx="8.500" cy="8.500" r="3" fill="#fff" stroke="#d42b2b" strokeWidth="1.200" /><path d="M6.500 6.500l4 4" stroke="#d42b2b" /></svg>
        <span className="ml-[10px] text-[9px]">POR</span>
        <div className="ml-[10px] text-center text-[9px] leading-[13px]">
          <div>00:00</div>
          <div>05/09/2016</div>
        </div>
      </div>
    </footer>
  );
}

export default function App() {
  return (
    <div className="flex h-screen flex-col overflow-hidden bg-[#dfe3e8] font-['Open_Sans',sans-serif] text-[8px] text-[#2f343a]">
      <TitleArea />
      <Ribbon />
      <FormulaBar />
      <main className="flex min-h-0 flex-1">
        <Sheet />
        <VerticalScroll />
      </main>
      <SheetTabs />
      <StatusBar />
      <Taskbar />
    </div>
  );
}
